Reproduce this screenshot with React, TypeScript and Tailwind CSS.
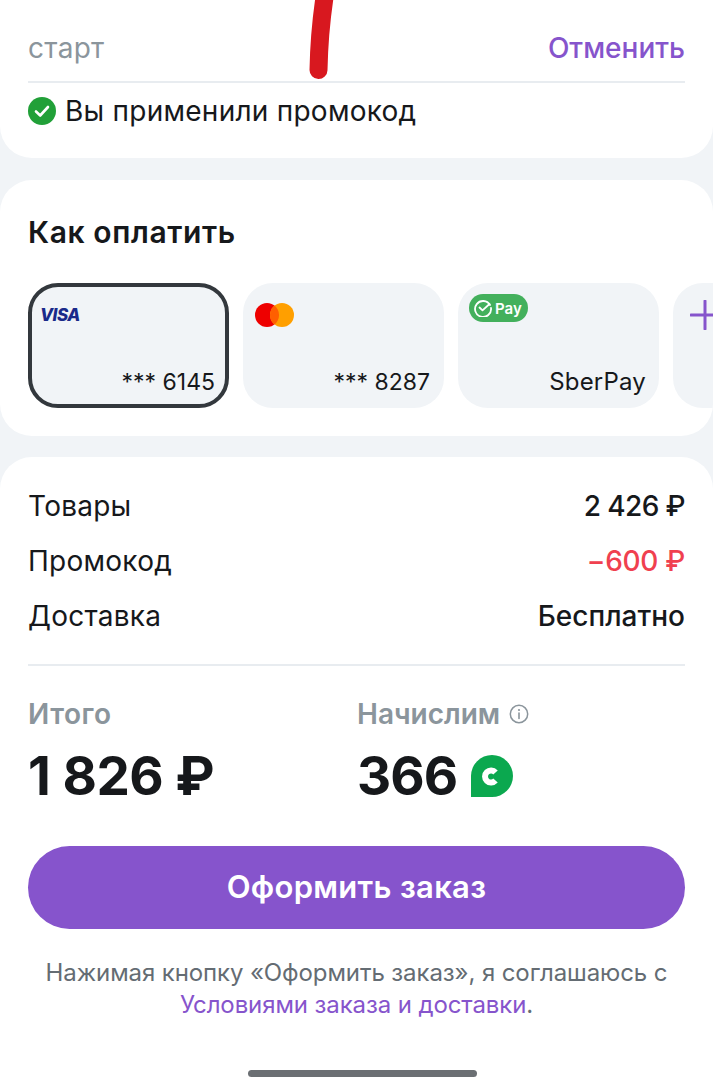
import React from "react";

const font = { fontFamily: "Inter, 'Noto Sans', sans-serif" };

function Row({ label, value, cls = "text-[#16181b]", track = "tracking-[0.2px]" }: { label: string; value: string; cls?: string; track?: string }) {
  return (
    <div className="flex items-center justify-between h-[55px] text-[28px] text-[#16181b]">
      <span className="tracking-[0.25px]">{label}</span>
      <span className={cls + " font-medium " + track}>{value}</span>
    </div>
  );
}

function Card({ children, label, selected, wide }: { children: React.ReactNode; label: string; selected?: boolean; wide?: boolean }) {
  return (
    <div
      className={
        "relative w-[201px] h-[125px] shrink-0 rounded-[30px] bg-[#f1f4f7] " +
        (selected ? "border-[4px] border-[#33383d]" : "")
      }
    >
      <div className={selected ? "absolute left-[8px] top-[17px]" : "absolute left-[12px] top-[12px]"}>{children}</div>
      <div
        className={
          "absolute leading-[28px] text-[#16181b] " +
          (wide ? "text-[24px] tracking-[0.2px] right-[13px] bottom-[12px]" : selected ? "text-[23px] right-[10px] bottom-[8px]" : "text-[23px] right-[14px] bottom-[12px]")
        }
      >
        {label}
      </div>
    </div>
  );
}

export default function App() {
  return (
    <div style={font} className="relative w-[713px] h-[1090px] overflow-hidden bg-[#f1f4f7] flex flex-col">
      <div className="h-[158px] bg-white rounded-b-[32px] px-[28px] shrink-0">
        <div className="h-[83px] border-b-[2px] border-[#e8ecf0] flex items-end justify-between pb-[17px] text-[28px] leading-[32px]">
          <span className="text-[#8b959c] tracking-[0.3px]">старт</span>
          <span className="text-[#8654cc] font-medium">Отменить</span>
        </div>
        <div className="flex items-center gap-[9px] mt-[12px]">
          <svg width="28" height="28" viewBox="0 0 28 28" className="shrink-0">
            <circle cx="14" cy="14" r="14" fill="#21a038" />
            <path d="M8 14.500l4.200 4L20 10" fill="none" stroke="#fff" strokeWidth="2.6" strokeLinecap="round" strokeLinejoin="round" />
          </svg>
          <span className="text-[28px] leading-[32px] text-[#16181b] tracking-[0.25px]">Вы применили промокод</span>
        </div>
      </div>

      <div className="mt-[22px] h-[256px] bg-white rounded-[32px] pl-[28px] pt-[33px] shrink-0 overflow-hidden">
        <div className="text-[30px] leading-[38px] font-semibold text-[#16181b] tracking-[0.6px]">Как оплатить</div>
        <div className="flex gap-[14px] mt-[32px]">
          <Card label="*** 6145" selected>
            <div className="text-[17px] leading-[22px] font-extrabold italic text-[#1a2a8a] tracking-[-0.5px]">VISA</div>
          </Card>
          <Card label="*** 8287">
            <svg width="40" height="24" viewBox="0 0 40 24" className="mt-[8px]">
              <circle cx="12" cy="12" r="12" fill="#ee0000" />
              <circle cx="27" cy="12" r="12" fill="#ff9f00" />
              <path d="M19.500 2.600a12 12 0 0 1 0 18.800a12 12 0 0 1 0-18.800z" fill="#ff5f00" />
            </svg>
          </Card>
          <Card label="SberPay" wide>
            <div className="-ml-[1px] -mt-[1px] w-[59px] h-[28px] rounded-full bg-[#43b05c] flex items-center pl-[5px] gap-[3px]">
              <svg width="18" height="18" viewBox="0 0 18 18" className="shrink-0">
                <path d="M16 6a8 8 0 1 0 1 3" fill="none" stroke="#fff" strokeWidth="1.800" strokeLinecap="round" />
                <path d="M5.500 8.500l3 2.800L15.500 5" fill="none" stroke="#fff" strokeWidth="1.800" strokeLinecap="round" strokeLinejoin="round" />
              </svg>
              <span className="text-[15px] leading-none font-semibold text-white">Pay</span>
            </div>
          </Card>
          <div className="relative w-[60px] h-[125px] shrink-0 rounded-l-[30px] bg-[#f1f4f7]">
            <svg width="28" height="30" viewBox="0 0 28 30" className="absolute left-[17px] top-[17px]">
              <path d="M15 1v28M1 15h26" stroke="#8654cc" strokeWidth="3" strokeLinecap="round" />
            </svg>
          </div>
        </div>
      </div>

      <div className="mt-[21px] flex-1 bg-white rounded-t-[32px] px-[28px] pt-[21px] relative">
        <Row label="Товары" value="2 426 ₽" track="tracking-[-0.6px]" />
        <Row label="Промокод" value="−600 ₽" cls="text-[#f0404f]" track="tracking-[-0.3px]" />
        <Row label="Доставка" value="Бесплатно" track="tracking-[0px]" />
        <div className="h-[2px] bg-[#e8ecf0] mt-[21px]" />
        <div className="flex mt-[30px]">
          <div className="w-[329px]">
            <div className="text-[28px] leading-[36px] font-semibold text-[#8b959c] tracking-[0.5px]">Итого</div>
            <div className="text-[53px] leading-[64px] font-bold text-[#16181b] mt-[12px] tracking-[-0.5px]">1 826 ₽</div>
          </div>
          <div>
            <div className="flex items-center gap-[9px] text-[28px] leading-[36px] font-semibold text-[#8b959c]">
              Начислим
              <svg width="20" height="20" viewBox="0 0 20 20">
                <circle cx="10" cy="10" r="8.700" fill="none" stroke="#8b959c" strokeWidth="1.500" />
                <path d="M10 9v5.500" stroke="#8b959c" strokeWidth="1.600" strokeLinecap="round" />
                <circle cx="10" cy="6" r="1.100" fill="#8b959c" />
              </svg>
            </div>
            <div className="flex items-center gap-[14px] mt-[12px]">
              <span className="text-[53px] leading-[64px] font-bold text-[#16181b] tracking-[-1px]">366</span>
              <svg width="42" height="42" viewBox="0 0 42 42">
                <path d="M21 0a21 21 0 0 1 0 42H0V21A21 21 0 0 1 21 0z" fill="#0ba84f" />
                <path d="M24.500 17.500A6 6 0 1 0 24.500 25.500" fill="none" stroke="#fff" strokeWidth="6" />
              </svg>
            </div>
          </div>
        </div>
        <div className="mt-[38px] h-[83px] rounded-full bg-[#8654cc] flex items-center justify-center text-white text-[31px] font-semibold tracking-[0.3px]">
          Оформить заказ
        </div>
        <div className="mt-[28px] text-center text-[24px] leading-[32px] text-[#646c73] tracking-[-0.1px]">
          <div>Нажимая кнопку «Оформить заказ», я соглашаюсь с</div>
          <div>
            <span className="text-[#8654cc]">Условиями заказа и доставки</span>.
          </div>
        </div>
        <div className="absolute left-[248px] top-[613px] w-[229px] h-[7px] rounded-full bg-[#6b6f73]" />
      </div>

      <svg width="50" height="90" viewBox="0 0 50 90" className="absolute left-[290px] top-0">
        <path d="M35 -6C31 20 29 45 28.500 70" fill="none" stroke="#d8181f" strokeWidth="18" strokeLinecap="round" />
      </svg>
    </div>
  );
}
